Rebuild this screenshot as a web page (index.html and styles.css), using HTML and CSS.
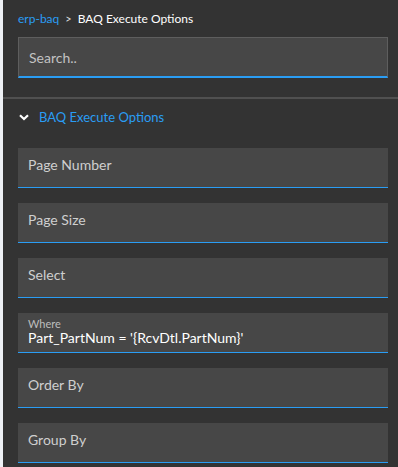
FILE: index.html
```html
<!DOCTYPE html>
<html lang="en">
<head>
  <meta charset="UTF-8">
  <title>BAQ Execute Options</title>
  <link rel="stylesheet" href="styles.css">
</head>
<body>

<div class="panel">
  <div class="crumbs">
    <a class="crumb-link">erp-baq</a>
    <span class="crumb-sep">&gt;</span>
    <span class="crumb-current">BAQ Execute Options</span>
  </div>

  <div class="search-wrap">
    <input class="search" type="text" placeholder="Search..">
  </div>

  <div class="section">
    <div class="section-head">
      <svg class="chevron" width="10" height="7" viewBox="0 0 10 7">
        <path d="M1 1.2 L5 5 L9 1.2" fill="none" stroke="#fff" stroke-width="2.2"/>
      </svg>
      <span>BAQ Execute Options</span>
    </div>

    <div class="field"><span class="placeholder">Page Number</span></div>
    <div class="field"><span class="placeholder">Page Size</span></div>
    <div class="field"><span class="placeholder">Select</span></div>
    <div class="field filled">
      <span class="small-label">Where</span>
      <span class="value">Part_PartNum = '{RcvDtl.PartNum}'</span>
    </div>
    <div class="field"><span class="placeholder">Order By</span></div>
    <div class="field"><span class="placeholder">Group By</span></div>
  </div>
</div>

</body>
</html>
```

FILE: styles.css
```css
:root {
  --bg: #333333;
  --field: #474747;
  --accent: #2a9df4;
  --label: #cfcfcf;
}

body {
  margin: 0;
  background: #eef1f5;
  font-family: Lato, 'Noto Sans', sans-serif;
  height: 467px;
  overflow: hidden;
}

.panel {
  margin-left: 3px;
  background: var(--bg);
  height: 467px;
}

.crumbs {
  padding: 9px 0 0 15px;
  height: 19px;
  font-size: 12px;
  display: flex;
  align-items: center;
  gap: 6px;
}

.crumb-link {
  color: var(--accent);
}

.crumb-sep {
  color: #ddd;
  font-size: 11px;
}

.crumb-current {
  color: #fff;
}

.search-wrap {
  padding: 9px 10px 0 15px;
}

.search {
  display: block;
  box-sizing: border-box;
  width: 100%;
  height: 41px;
  background: var(--field);
  border: 1px solid #5e5e5e;
  border-bottom: 2px solid var(--accent);
  color: #ddd;
  font-family: inherit;
  font-size: 14px;
  padding: 0 10px;
  outline: none;
}

.search::placeholder {
  color: #c2c2c2;
}

.section {
  margin-top: 19px;
  border-top: 2px solid #505050;
  padding: 0 10px 0 15px;
}

.section-head {
  height: 36px;
  display: flex;
  align-items: center;
  gap: 10px;
  padding: 0 0 0 1px;
  color: var(--accent);
  font-size: 13px;
}

.field {
  height: 39px;
  background: var(--field);
  border-bottom: 1px solid var(--accent);
  margin-top: 15px;
  display: flex;
  flex-direction: column;
  padding: 0 10px;
}

.section-head + .field {
  margin-top: 13px;
}

.placeholder {
  color: var(--label);
  font-size: 14px;
  margin-top: 8px;
}

.small-label {
  color: #bdbdbd;
  font-size: 11px;
  margin-top: 4px;
}

.value {
  color: #fff;
  font-size: 14px;
  margin-top: -1px;
}
```
